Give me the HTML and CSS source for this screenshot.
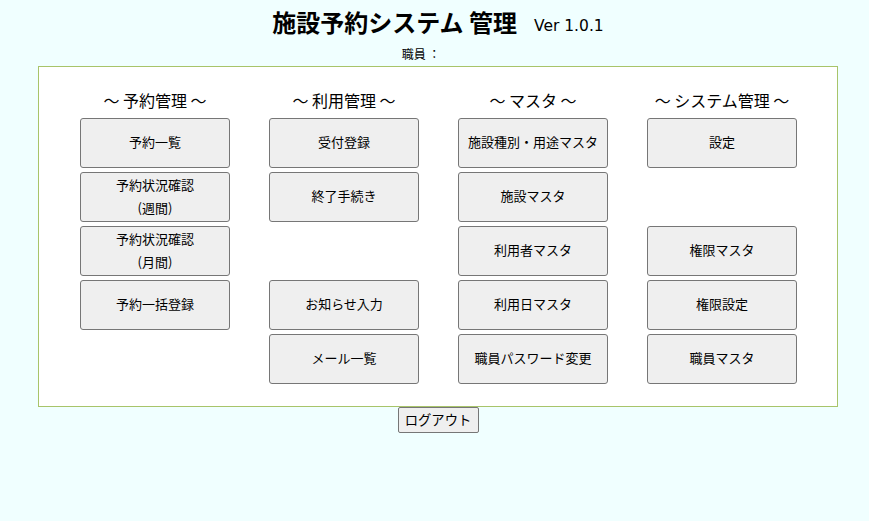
FILE: index.html
```html
<!DOCTYPE html>
<html lang="ja">
<head>
<meta charset="utf-8">
<title>施設予約システム 管理</title>
<link rel="stylesheet" href="styles.css">
</head>
<body>
<div class="page">
  <h1 class="title">施設予約システム 管理<span class="ver">Ver 1.0.1</span></h1>
  <div class="staff">職員 ：</div>
  <div class="panel">
    <div class="grid">
      <div class="col">
        <div class="col-head">～ 予約管理 ～</div>
        <button class="menu-btn">予約一覧</button>
        <button class="menu-btn">予約状況確認<br>(週間)</button>
        <button class="menu-btn">予約状況確認<br>(月間)</button>
        <button class="menu-btn">予約一括登録</button>
      </div>
      <div class="col">
        <div class="col-head">～ 利用管理 ～</div>
        <button class="menu-btn">受付登録</button>
        <button class="menu-btn">終了手続き</button>
        <div class="slot"></div>
        <button class="menu-btn">お知らせ入力</button>
        <button class="menu-btn">メール一覧</button>
      </div>
      <div class="col">
        <div class="col-head">～ マスタ ～</div>
        <button class="menu-btn">施設種別・用途マスタ</button>
        <button class="menu-btn">施設マスタ</button>
        <button class="menu-btn">利用者マスタ</button>
        <button class="menu-btn">利用日マスタ</button>
        <button class="menu-btn">職員パスワード変更</button>
      </div>
      <div class="col">
        <div class="col-head">～ システム管理 ～</div>
        <button class="menu-btn">設定</button>
        <div class="slot"></div>
        <button class="menu-btn">権限マスタ</button>
        <button class="menu-btn">権限設定</button>
        <button class="menu-btn">職員マスタ</button>
      </div>
    </div>
  </div>
  <div class="logout-row"><button class="logout">ログアウト</button></div>
</div>
</body>
</html>
```

FILE: styles.css
```css
html, body {
  margin: 0;
  padding: 0;
  background: #f0ffff;
}
body {
  padding: 8px;
  font-family: "Noto Sans CJK JP", "Noto Sans", sans-serif;
  color: #000;
}
.page {
  width: 800px;
  margin-left: 30px;
  display: flex;
  flex-direction: column;
  align-items: center;
}
.title {
  margin: 0;
  font-size: 24px;
  font-weight: bold;
  line-height: 28px;
  height: 28px;
  white-space: nowrap;
  display: flex;
  align-items: center;
}
.ver {
  font-size: 15.5px;
  font-weight: normal;
  line-height: 20px;
  margin-left: 17px;
  margin-top: 7px;
  font-family: "DejaVu Sans", "Noto Sans CJK JP", sans-serif;
}
.staff {
  margin-top: 10px;
  margin-right: 34px;
  font-size: 12px;
  line-height: 16px;
  height: 16px;
}
.panel {
  margin-top: 4px;
  width: 800px;
  box-sizing: border-box;
  height: 341px;
  border: 1px solid #a8c46a;
  background: #ffffff;
  display: flex;
  justify-content: center;
  padding-top: 23px;
}
.grid {
  display: grid;
  grid-template-columns: repeat(4, 150px);
  column-gap: 39px;
  margin-left: 1px;
}
.col {
  display: flex;
  flex-direction: column;
  gap: 4px;
}
.col-head {
  font-size: 16px;
  line-height: 20px;
  text-align: center;
  height: 24px;
  white-space: nowrap;
}
.menu-btn, .slot {
  width: 150px;
  height: 50px;
  box-sizing: border-box;
}
.menu-btn {
  border: 1px solid #767676;
  border-radius: 3px;
  background: #efefef;
  font-family: "Noto Sans CJK JP", sans-serif;
  font-size: 13px;
  line-height: 23px;
  color: #000;
  padding: 0 0 3px 0;
  text-align: center;
}
.logout-row {
  display: flex;
  justify-content: center;
}
.logout {
  height: 26px;
  box-sizing: border-box;
  padding: 0 6px;
  border: 1px solid #767676;
  border-radius: 2px;
  background: #efefef;
  font-family: "Noto Sans CJK JP", sans-serif;
  font-size: 13.33px;
  line-height: 22px;
  color: #000;
  width: 81px;
}
```
